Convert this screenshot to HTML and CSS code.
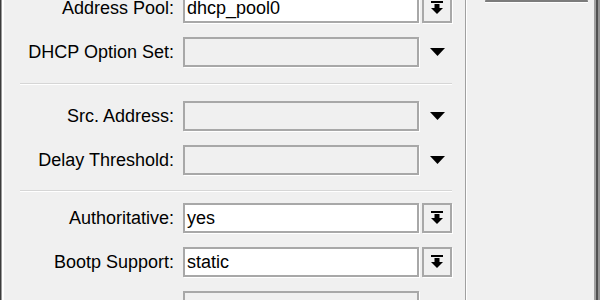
FILE: index.html
```html
<!DOCTYPE html>
<html lang="en">
<head>
    <meta charset="UTF-8">
    <meta name="viewport" content="width=device-width, initial-scale=1.0">
    <title>DHCP Server</title>
    <link rel="stylesheet" href="styles.css">
</head>
<body>
    <div class="window">
        <div class="form-panel">
            <div class="section first">
                <div class="row">
                    <span class="label">Address Pool:</span>
                    <div class="field filled">dhcp_pool0</div>
                    <div class="btn-combo">
                        <svg width="12" height="14" viewBox="0 0 12 14"><rect x="0" y="0" width="12" height="2" fill="#000"/><rect x="3.5" y="3" width="5" height="5" fill="#000"/><polygon points="0,7 12,7 6,13" fill="#000"/></svg>
                    </div>
                </div>
                <div class="row">
                    <span class="label">DHCP Option Set:</span>
                    <div class="field"></div>
                    <div class="drop">
                        <svg width="15" height="8" viewBox="0 0 15 8"><polygon points="0,0 15,0 7.5,8" fill="#000"/></svg>
                    </div>
                </div>
            </div>

            <div class="separator"></div>

            <div class="section">
                <div class="row">
                    <span class="label">Src. Address:</span>
                    <div class="field"></div>
                    <div class="drop">
                        <svg width="15" height="8" viewBox="0 0 15 8"><polygon points="0,0 15,0 7.5,8" fill="#000"/></svg>
                    </div>
                </div>
                <div class="row">
                    <span class="label">Delay Threshold:</span>
                    <div class="field"></div>
                    <div class="drop">
                        <svg width="15" height="8" viewBox="0 0 15 8"><polygon points="0,0 15,0 7.5,8" fill="#000"/></svg>
                    </div>
                </div>
            </div>

            <div class="separator tight"></div>

            <div class="section">
                <div class="row">
                    <span class="label">Authoritative:</span>
                    <div class="field filled">yes</div>
                    <div class="btn-combo">
                        <svg width="12" height="14" viewBox="0 0 12 14"><rect x="0" y="0" width="12" height="2" fill="#000"/><rect x="3.5" y="3" width="5" height="5" fill="#000"/><polygon points="0,7 12,7 6,13" fill="#000"/></svg>
                    </div>
                </div>
                <div class="row">
                    <span class="label">Bootp Support:</span>
                    <div class="field filled">static</div>
                    <div class="btn-combo">
                        <svg width="12" height="14" viewBox="0 0 12 14"><rect x="0" y="0" width="12" height="2" fill="#000"/><rect x="3.5" y="3" width="5" height="5" fill="#000"/><polygon points="0,7 12,7 6,13" fill="#000"/></svg>
                    </div>
                </div>
                <div class="row">
                    <span class="label"></span>
                    <div class="field"></div>
                </div>
            </div>
        </div>

        <div class="side-panel">
            <div class="btn-side"></div>
        </div>
    </div>
</body>
</html>
```

FILE: styles.css
```css
body {
    margin: 0;
    font-family: "Liberation Sans", Arial, sans-serif;
    font-size: 18px;
    color: #000;
    background-color: #f0f0f0;
}

.window {
    display: flex;
    width: 600px;
    height: 300px;
    box-sizing: border-box;
    overflow: hidden;
    border-left: 1px solid #3c3c3c;
    border-right: 2px solid #949494;
    box-shadow: inset 1px 0 0 #9a9a9a, inset 3px 0 0 #fff, inset -2px 0 0 #505050, inset -4px 0 0 #a0a0a0;
}

.form-panel {
    width: 432px;
    padding: 0 13px 0 19px;
    border-right: 1px solid #a0a0a0;
    box-shadow: 1px 0 0 #fff;
}

.section {
    display: flex;
    flex-direction: column;
    gap: 14px;
}

.section.first {
    margin-top: -7px;
}

.separator {
    margin: 16px 0 16px 0;
    border-top: 1px solid #d6d6d6;
    border-bottom: 1px solid #fff;
}

.separator.tight {
    margin: 15px 0 11px 0;
}

.row {
    display: flex;
    align-items: center;
    height: 30px;
}

.label {
    width: 154px;
    margin-right: 9px;
    text-align: right;
    white-space: nowrap;
}

.field {
    width: 236px;
    height: 30px;
    box-sizing: border-box;
    border: 2px solid #a8a8a8;
    box-shadow: 1px 1px 0 #fff;
    padding: 0 0 0 2px;
    line-height: 26px;
    white-space: nowrap;
}

.field.filled {
    background-color: #fff;
}

.btn-combo, .drop {
    width: 30px;
    height: 30px;
    margin-left: 3px;
    box-sizing: border-box;
    display: flex;
    align-items: center;
    justify-content: center;
}

.btn-combo {
    border: 2px solid #a8a8a8;
    box-shadow: 1px 1px 0 #fff;
}

.side-panel {
    padding-left: 19px;
}

.btn-side {
    width: 103px;
    height: 32px;
    margin-top: -30px;
    box-sizing: border-box;
    border: 1px solid #a0a0a0;
    border-bottom: 2px solid #7c7c7c;
    box-shadow: 0 1px 0 #fff;
}
```
